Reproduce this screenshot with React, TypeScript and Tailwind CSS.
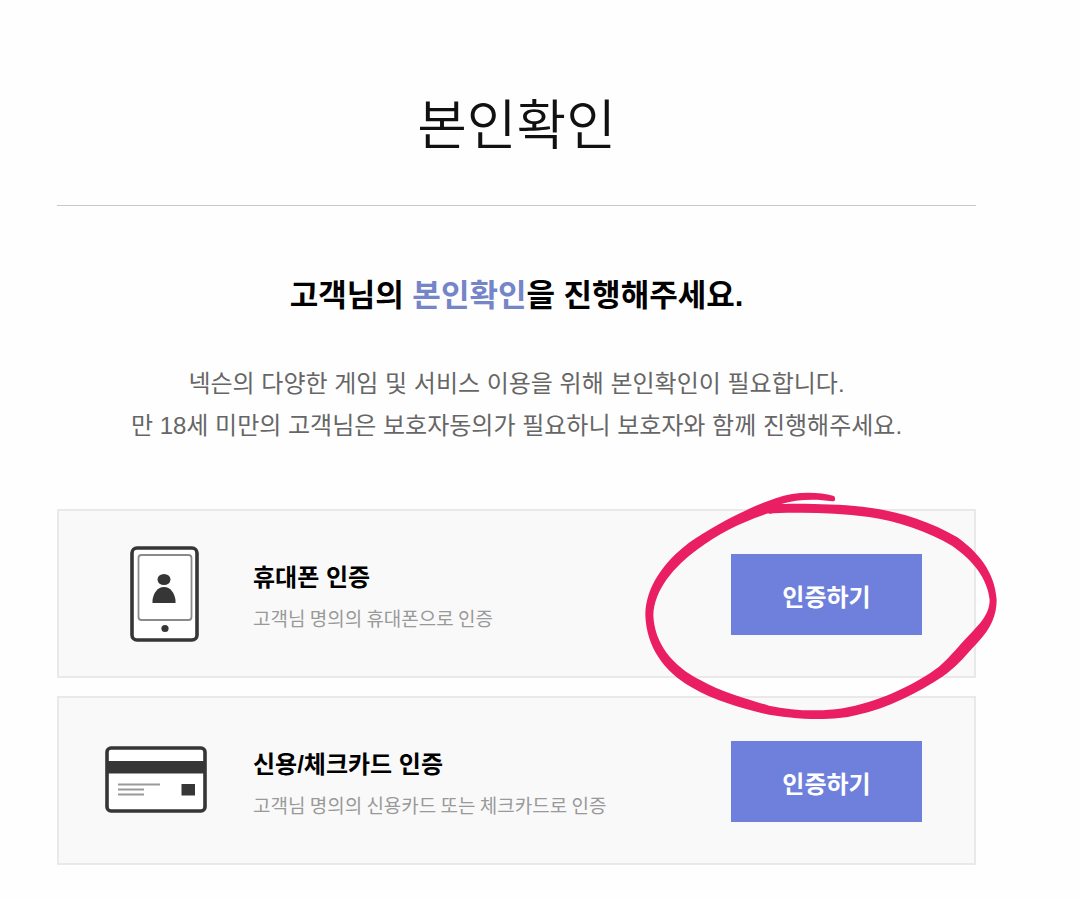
import type { ReactNode } from "react";

interface VerifyMethod {
  id: string;
  title: string;
  description: string;
  icon: ReactNode;
  highlighted?: boolean;
}

function PhoneIcon() {
  return (
    <svg viewBox="0 0 104 100" className="h-[100px] w-[104px] shrink-0" aria-hidden="true">
      <rect x="28" y="4" width="65" height="92" rx="5" fill="#fff" stroke="#363636" strokeWidth="3.600" />
      <rect x="34.500" y="11" width="53" height="65" rx="3" fill="#fff" stroke="#8a8a8a" strokeWidth="1.800" />
      <ellipse cx="60" cy="35.500" rx="6.500" ry="5.500" fill="#363636" />
      <path d="M48.500 59v-3c1-7 5-13 11.500-13s10.500 6 11.500 13v3z" fill="#363636" />
      <circle cx="61" cy="84.500" r="3.600" fill="#363636" />
    </svg>
  );
}

function CardIcon() {
  return (
    <svg viewBox="0 0 104 100" className="h-[100px] w-[104px] shrink-0" aria-hidden="true">
      <rect x="3" y="17" width="98" height="63" rx="4" fill="#fff" stroke="#363636" strokeWidth="3.600" />
      <path d="M3 30h98v12.500H3z" fill="#363636" />
      <path d="M14 53.500h42M14 58.500h26M14 63.500h26" stroke="#999" strokeWidth="2" />
      <path d="M77.500 53H91v11.500H77.500z" fill="#363636" />
    </svg>
  );
}

// Hand-drawn ring around the button
function MarkerRing() {
  return (
    <svg
      viewBox="30 24 1080 708"
      className="pointer-events-none absolute -right-[25px] -top-[23px] z-10 h-[236px] w-[360px]"
      aria-hidden="true"
    >
      <path
        fill="#ea1e63"
        fillRule="evenodd"
        d="M612 47C570 36 500 32 440 55C350 85 250 140 180 188C105 245 50 320 49 405C52 500 105 575 185 620C260 665 340 683 400 700C500 722 620 722 680 706C780 685 870 635 940 590C985 560 1015 520 1050 483C1085 446 1103 405 1103 360C1098 275 1045 215 985 172C900 122 800 91 700 80C620 72 520 70 457 72C500 58 560 55 610 64Q620 64 618 55Q618 48 612 47Z
        M418 100C340 125 265 163 207 207C132 262 76 330 73 405C76 490 130 558 215 601C280 638 360 659 420 677C500 695 600 695 660 681C760 660 865 610 930 560C965 530 995 490 1030 455C1062 422 1082 395 1082 360C1076 295 1030 240 970 198C900 155 800 122 720 111C620 98 530 97 432 100Q421 103 418 100Z"
      />
    </svg>
  );
}

const methods: VerifyMethod[] = [
  {
    id: "phone",
    title: "휴대폰 인증",
    description: "고객님 명의의 휴대폰으로 인증",
    icon: <PhoneIcon />,
    highlighted: true,
  },
  {
    id: "card",
    title: "신용/체크카드 인증",
    description: "고객님 명의의 신용카드 또는 체크카드로 인증",
    icon: <CardIcon />,
  },
];

export default function App() {
  return (
    <main className="min-h-screen bg-[#fefefe] pt-[84px] pr-[103px] pb-8 pl-[57px] font-['Liberation_Sans','Noto_Sans_CJK_KR',sans-serif] text-black">
      <header className="border-b border-[#c8c8c8] pb-9 text-center">
        <h1 className="text-[54px] leading-[85px] font-[350] text-[#111]">본인확인</h1>
      </header>

      <section className="mt-[66px] text-center">
        <h2 className="text-[31px] leading-[48px] font-bold">
          고객님의 <span className="text-[#7485c8]">본인확인</span>을 진행해주세요.
        </h2>
        <p className="mt-[43px] text-2xl leading-[42px] text-[#666]">
          넥슨의 다양한 게임 및 서비스 이용을 위해 본인확인이 필요합니다.
          <br />
          만 18세 미만의 고객님은 보호자동의가 필요하니 보호자와 함께 진행해주세요.
        </p>
      </section>

      <ul className="mt-[62px] flex flex-col gap-[18px]">
        {methods.map((method) => (
          <li
            key={method.id}
            className="relative flex items-center border-2 border-[#e9e9e9] bg-[#f9f9f9] pt-[33px] pr-[52px] pb-8 pl-[45px]"
          >
            {method.icon}
            <div className="ml-[45px] flex-1 pt-2">
              <h3 id={method.id} className="text-2xl leading-10 font-bold">
                {method.title}
              </h3>
              <p className="font-['Noto_Sans_CJK_KR',sans-serif] text-[19px] leading-10 text-[#999]">
                {method.description}
              </p>
            </div>
            <button
              type="button"
              aria-describedby={method.id}
              className="h-[81px] w-[191px] shrink-0 bg-[#6e80dc] pt-2 text-2xl font-bold text-white"
            >
              인증하기
            </button>
            {method.highlighted && <MarkerRing />}
          </li>
        ))}
      </ul>
    </main>
  );
}
